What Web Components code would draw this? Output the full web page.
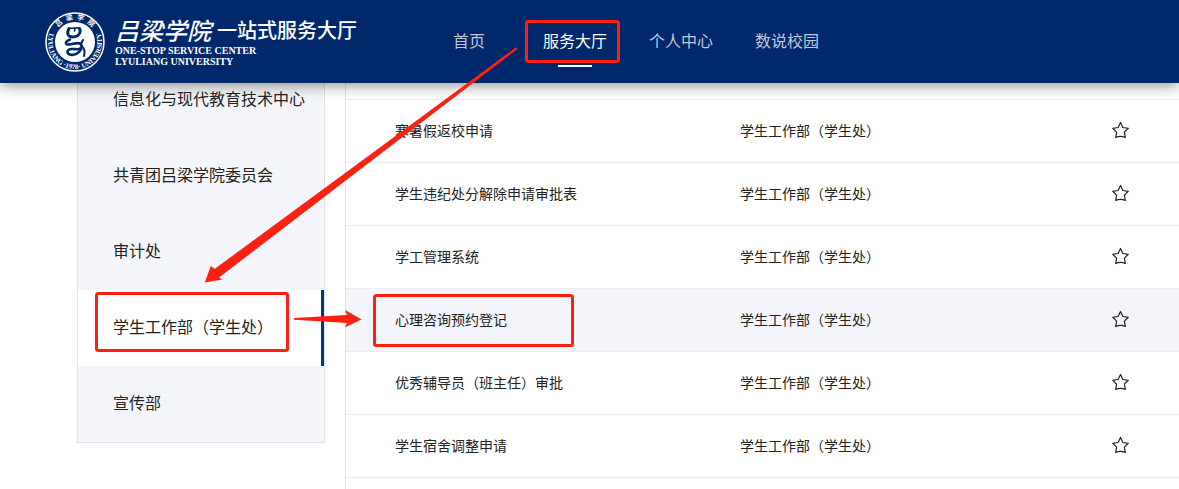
<!DOCTYPE html>
<html lang="zh-CN">
<head>
<meta charset="utf-8">
<title>吕梁学院 一站式服务大厅</title>
<style>
  body {
    margin: 0;
    min-height: 100vh;
    overflow: hidden;
    background: #fff;
    color: #222;
    font-family: "Noto Sans CJK SC", sans-serif;
    font-size: 14px;
  }
</style>
</head>
<body>
<service-hall></service-hall>

<script>
const define = (name, html, setup) => {
  const template = document.createElement('template');
  template.innerHTML = html;
  customElements.define(name, class extends HTMLElement {
    constructor() {
      super();
      this.attachShadow({ mode: 'open' }).append(template.content.cloneNode(true));
    }
    connectedCallback() { if (setup) setup(this, this.shadowRoot); }
  });
};

/* Round university seal */
define('school-seal', `
  <style>
    :host { display: block; width: 60px; height: 60px; }
    svg { display: block; }
    text { font-family: "Liberation Serif", "Noto Sans CJK SC", serif; font-weight: 700; fill: #fff; }
  </style>
  <svg width="60" height="60" viewBox="0 0 60 60" role="img" aria-label="吕梁学院校徽">
    <defs>
      <path id="low" d="M5 20 A27 27 0 1 0 55 20"/>
      <path id="top" d="M9 23 A22 22 0 0 1 51 23"/>
    </defs>
    <circle cx="30" cy="30" r="29" fill="none" stroke="#fff" stroke-width="1.5"/>
    <circle cx="30" cy="30" r="20" fill="#fff"/>
    <text font-size="7"><textPath href="#low" startOffset="50%" text-anchor="middle">LYULIANG ·1978· UNIVERSITY</textPath></text>
    <text font-size="7"><textPath href="#top" startOffset="50%" text-anchor="middle">吕&#160;&#160;梁&#160;&#160;学&#160;&#160;院</textPath></text>
    <g fill="none" stroke="#00286b" stroke-linecap="round" stroke-linejoin="round">
      <path stroke-width="3" d="M24 16.500c-1.500 3-1.500 6 0 7.500 3 1.500 6.500 1 9-.5 2-2 2.500-5 1.500-7"/>
      <path stroke-width="1.600" d="M25 16c3 .8 6-.8 9.500.2M30 16l-.5 3"/>
      <path stroke-width="2.600" d="M25 27.500c-4 1.500-5.500 4-2.500 5 5 0 9-2.500 12.500-1 2.500 2 2 5-.5 8-3 3.500-9 4.500-11.500 2-1.500-3 1-4.500 4-4.500 3.500 0 6 .8 8.500-.5"/>
      <path stroke-width="2" d="M36.500 34c3 2 3.500 6 2.500 10M38 28l-2 4"/>
    </g>
  </svg>`);

define('site-brand', `
  <style>
    :host { display: flex; align-items: center; gap: 10px; width: 371px; color: #fff; }
    .text { padding-bottom: 2px; }
    .cn { display: flex; align-items: center; gap: 6px; height: 30px; white-space: nowrap; }
    .school { font-size: 24px; font-weight: 500; font-style: italic; line-height: 30px; }
    .hall { font-size: 20px; font-weight: 500; line-height: 30px; }
    .en { font: 700 10px/11px "Liberation Serif", serif; white-space: nowrap; }
  </style>
  <school-seal></school-seal>
  <div class="text">
    <div class="cn"><span class="school">吕梁学院</span><span class="hall">一站式服务大厅</span></div>
    <div class="en">ONE-STOP SERVICE CENTER</div>
    <div class="en">LYULIANG UNIVERSITY</div>
  </div>`);

define('nav-link', `
  <style>
    :host { display: flex; justify-content: center; width: 106px; height: 83px; }
    a { position: relative; font-size: 16px; line-height: 80px; color: #bfc9da; text-decoration: none; }
    :host([current]) a { color: #fff; }
    :host([current]) a::after {
      content: ""; position: absolute; left: 50%; bottom: 16px;
      width: 34px; height: 2px; margin-left: -17px; background: #fff;
    }
  </style>
  <a href="#"><slot></slot></a>`);

define('site-header', `
  <style>
    :host {
      display: block; position: sticky; top: 0; z-index: 2;
      background: #00286b; box-shadow: 0 2px 14px rgba(0, 0, 0, .45);
    }
    header { display: flex; align-items: center; height: 83px; padding-left: 45px; }
    nav { display: flex; }
  </style>
  <header>
    <site-brand></site-brand>
    <nav>
      <nav-link>首页</nav-link>
      <nav-link current>服务大厅</nav-link>
      <nav-link>个人中心</nav-link>
      <nav-link>数说校园</nav-link>
    </nav>
  </header>`);

define('dept-item', `
  <style>
    :host { display: block; }
    a {
      display: block; padding: 0 0 4px 35px; font-size: 16px; line-height: 72px;
      color: #222; text-decoration: none; white-space: nowrap;
    }
    :host([current]) a { background: #fff; border-right: 3px solid #003591; }
  </style>
  <a href="#"><slot></slot></a>`);

define('dept-list', `
  <style>
    :host { display: block; flex: none; width: 246px; background: #f4f5fa; border: 1px solid #e1e2e6; border-top: 0; }
  </style>
  <nav aria-label="部门"><slot></slot></nav>`);

define('service-table', `
  <style>
    :host { display: block; flex: 1; padding-top: 37px; border-left: 1px solid #e1e2e6; }
    table { width: 100%; table-layout: fixed; border-collapse: separate; border-spacing: 0; border-top: 1px solid #ebecf3; }
    td { height: 60px; padding: 0 0 2px 49px; border-bottom: 1px solid #ebecf3; line-height: 20px; }
    td.star { padding: 0 0 2px; text-align: center; }
    .name { width: 345px; }
    .fav { width: 118px; }
    tr.on td { background: #f4f5fa; }
    a { color: inherit; text-decoration: none; }
    button { display: block; margin: 0 auto; padding: 0; border: 0; background: none; width: 20px; height: 20px; }
    svg { display: block; }
  </style>
  <table>
    <colgroup><col class="name"><col><col class="fav"></colgroup>
    <tbody></tbody>
  </table>`, (host, root) => {
  const names = ['寒暑假返校申请', '学生违纪处分解除申请审批表', '学工管理系统', '心理咨询预约登记', '优秀辅导员（班主任）审批', '学生宿舍调整申请'];
  root.querySelector('tbody').innerHTML = names.map(name => `
    <tr${name === '心理咨询预约登记' ? ' class="on"' : ''}>
      <td><a href="#">${name}</a></td>
      <td>学生工作部（学生处）</td>
      <td class="star"><button type="button" aria-label="收藏${name}">
        <svg width="20" height="20" viewBox="0 0 20 20" fill="none" stroke="#222" stroke-width="1.2" stroke-linejoin="round"><path d="M10.500 2.500l2.400 5 5.400.8-3.900 3.800.9 5.400q-4.800-2.400-9.600 0l.9-5.400-3.900-3.800 5.400-.8z"/></svg>
      </button></td>
    </tr>`).join('');
});

/* Red boxes and arrows that lie over the page */
define('guide-marks', `
  <style>
    :host { position: absolute; top: 0; left: 0; z-index: 3; pointer-events: none; }
    svg { display: block; }
  </style>
  <svg width="620" height="360" aria-hidden="true">
    <g fill="none" stroke="#ff2012" stroke-width="3">
      <rect x="526.5" y="21.5" width="92" height="40" rx="2"/>
      <rect x="96.5" y="293.5" width="191" height="57" rx="2"/>
      <rect x="374.5" y="295.5" width="198" height="50" rx="2"/>
    </g>
    <g fill="#ff2012">
      <path d="M516.300 47.200 L214.500 269 L210.800 266 L204.800 282.500 L222.300 279.500 L219 277.500 L517.500 49z"/>
      <path d="M294 318 L347 315 L345 310 L361.500 319.500 L345 327.300 L347 323 L294 319.800z"/>
    </g>
  </svg>`);

define('service-hall', `
  <style>
    :host { display: flex; flex-direction: column; height: 100vh; }
    main { display: flex; flex: 1; align-items: stretch; gap: 20px; margin-top: -21px; padding-left: 77px; }
    dept-list { align-self: flex-start; }
  </style>
  <site-header></site-header>
  <main>
    <dept-list>
      <dept-item>信息化与现代教育技术中心</dept-item>
      <dept-item>共青团吕梁学院委员会</dept-item>
      <dept-item>审计处</dept-item>
      <dept-item current>学生工作部（学生处）</dept-item>
      <dept-item>宣传部</dept-item>
    </dept-list>
    <service-table></service-table>
  </main>
  <guide-marks></guide-marks>`);
</script>
</body>
</html>
